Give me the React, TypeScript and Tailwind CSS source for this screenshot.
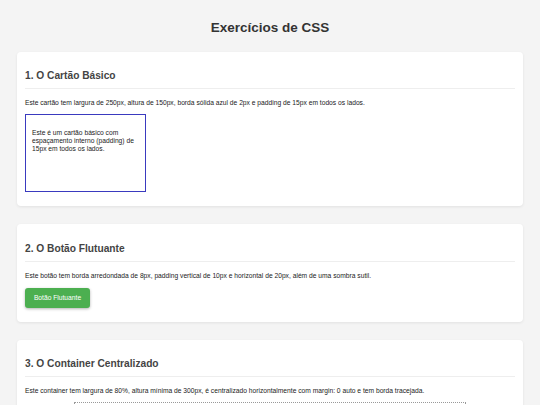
export default function App() {
  const font = { fontFamily: '"Liberation Sans", Arial, sans-serif' };
  return (
    <div className="min-h-[405px] bg-[#f4f4f4] px-[17px] pt-[20px] pb-[20px] overflow-hidden" style={font}>
      <h1 className="text-center text-[13.5px] leading-[16px] font-bold text-[#333] mb-[16px]">Exercícios de CSS</h1>

      <div className="flex flex-col gap-[18px]">
        <section className="bg-white rounded-[4px] shadow-[0_1px_3px_rgba(0,0,0,0.08)] px-[8px] pt-[18px] pb-[14px]">
          <h2 className="text-[10.2px] leading-[12px] font-bold text-[#444] pb-[6px] border-b border-[#eeeeee]">1. O Cartão Básico</h2>
          <p className="mt-[10px] text-[6.7px] leading-[8px] text-[#222]">Este cartão tem largura de 250px, altura de 150px, borda sólida azul de 2px e padding de 15px em todos os lados.</p>
          <div className="mt-[7px] w-[121px] h-[78px] border border-[#3a3abf] px-[6px] pt-[14px]">
            <p className="text-[6.7px] leading-[8px] text-[#222]">Este é um cartão básico com espaçamento interno (padding) de 15px em todos os lados.</p>
          </div>
        </section>

        <section className="bg-white rounded-[4px] shadow-[0_1px_3px_rgba(0,0,0,0.08)] px-[8px] pt-[19px] pb-[14px]">
          <h2 className="text-[10.2px] leading-[12px] font-bold text-[#444] pb-[6px] border-b border-[#eeeeee]">2. O Botão Flutuante</h2>
          <p className="mt-[10px] text-[6.7px] leading-[8px] text-[#222]">Este botão tem borda arredondada de 8px, padding vertical de 10px e horizontal de 20px, além de uma sombra sutil.</p>
          <button className="mt-[8px] w-[65px] h-[20px] rounded-[3px] bg-[#4caf50] text-white text-[6.7px] leading-[8px] shadow-[0_1px_3px_rgba(0,0,0,0.3)]">Botão Flutuante</button>
        </section>

        <section className="bg-white rounded-[4px] shadow-[0_1px_3px_rgba(0,0,0,0.08)] px-[8px] pt-[18px] pb-[14px]">
          <h2 className="text-[10.2px] leading-[12px] font-bold text-[#444] pb-[6px] border-b border-[#eeeeee]">3. O Container Centralizado</h2>
          <p className="mt-[10px] text-[6.7px] leading-[8px] text-[#222]">Este container tem largura de 80%, altura mínima de 300px, é centralizado horizontalmente com margin: 0 auto e tem borda tracejada.</p>
          <div className="mt-[7px] mx-auto w-[80%] min-h-[126px] border border-dotted border-[#999]"></div>
        </section>
      </div>
    </div>
  );
}
